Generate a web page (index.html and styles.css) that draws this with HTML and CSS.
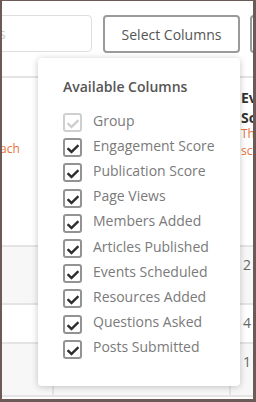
FILE: index.html
```html
<!DOCTYPE html>
<html>
<head>
<meta charset="utf-8">
<link rel="stylesheet" href="styles.css">
</head>
<body>
<div class="frame">
  <div class="toolbar">
    <div class="search"><span class="ph">s</span></div>
    <button class="btn">Select Columns</button>
    <div class="btn btn-cut"></div>
  </div>
  <div class="table">
    <div class="row head">
      <div class="cell c1"><span class="desc desc-left">ach</span></div>
      <div class="cell c2"></div>
      <div class="cell c3">
        <div class="htitle"><span class="hl1">Events</span><span class="hl2">Scheduled</span></div>
        <div class="desc">The scheduled</div>
      </div>
    </div>
    <div class="row r1 alt">
      <div class="cell c1"></div><div class="cell c2"></div><div class="cell c3 val">2</div>
    </div>
    <div class="row r2">
      <div class="cell c1"></div><div class="cell c2"></div><div class="cell c3 val">4</div>
    </div>
    <div class="row r3 alt">
      <div class="cell c1"></div><div class="cell c2"></div><div class="cell c3 val">1</div>
    </div>
  </div>

  <div class="dropdown">
    <div class="dd-title">Available Columns</div>
    <ul class="opts">
      <li class="opt disabled"><span class="cb"><svg viewBox="0 0 512 512"><path d="M173.9 439.4l-166.4-166.4c-10-10-10-26.2 0-36.2l36.2-36.2c10-10 26.2-10 36.2 0L192 312.7 432.1 72.6c10-10 26.2-10 36.2 0l36.2 36.2c10 10 10 26.2 0 36.2l-294.4 294.4c-10 10-26.2 10-36.2 0z"/></svg></span><span class="lbl">Group</span></li>
      <li class="opt"><span class="cb"><svg viewBox="0 0 512 512"><path d="M173.9 439.4l-166.4-166.4c-10-10-10-26.2 0-36.2l36.2-36.2c10-10 26.2-10 36.2 0L192 312.7 432.1 72.6c10-10 26.2-10 36.2 0l36.2 36.2c10 10 10 26.2 0 36.2l-294.4 294.4c-10 10-26.2 10-36.2 0z"/></svg></span><span class="lbl">Engagement Score</span></li>
      <li class="opt"><span class="cb"><svg viewBox="0 0 512 512"><path d="M173.9 439.4l-166.4-166.4c-10-10-10-26.2 0-36.2l36.2-36.2c10-10 26.2-10 36.2 0L192 312.7 432.1 72.6c10-10 26.2-10 36.2 0l36.2 36.2c10 10 10 26.2 0 36.2l-294.4 294.4c-10 10-26.2 10-36.2 0z"/></svg></span><span class="lbl">Publication Score</span></li>
      <li class="opt"><span class="cb"><svg viewBox="0 0 512 512"><path d="M173.9 439.4l-166.4-166.4c-10-10-10-26.2 0-36.2l36.2-36.2c10-10 26.2-10 36.2 0L192 312.7 432.1 72.6c10-10 26.2-10 36.2 0l36.2 36.2c10 10 10 26.2 0 36.2l-294.4 294.4c-10 10-26.2 10-36.2 0z"/></svg></span><span class="lbl">Page Views</span></li>
      <li class="opt"><span class="cb"><svg viewBox="0 0 512 512"><path d="M173.9 439.4l-166.4-166.4c-10-10-10-26.2 0-36.2l36.2-36.2c10-10 26.2-10 36.2 0L192 312.7 432.1 72.6c10-10 26.2-10 36.2 0l36.2 36.2c10 10 10 26.2 0 36.2l-294.4 294.4c-10 10-26.2 10-36.2 0z"/></svg></span><span class="lbl">Members Added</span></li>
      <li class="opt"><span class="cb"><svg viewBox="0 0 512 512"><path d="M173.9 439.4l-166.4-166.4c-10-10-10-26.2 0-36.2l36.2-36.2c10-10 26.2-10 36.2 0L192 312.7 432.1 72.6c10-10 26.2-10 36.2 0l36.2 36.2c10 10 10 26.2 0 36.2l-294.4 294.4c-10 10-26.2 10-36.2 0z"/></svg></span><span class="lbl">Articles Published</span></li>
      <li class="opt"><span class="cb"><svg viewBox="0 0 512 512"><path d="M173.9 439.4l-166.4-166.4c-10-10-10-26.2 0-36.2l36.2-36.2c10-10 26.2-10 36.2 0L192 312.7 432.1 72.6c10-10 26.2-10 36.2 0l36.2 36.2c10 10 10 26.2 0 36.2l-294.4 294.4c-10 10-26.2 10-36.2 0z"/></svg></span><span class="lbl">Events Scheduled</span></li>
      <li class="opt"><span class="cb"><svg viewBox="0 0 512 512"><path d="M173.9 439.4l-166.4-166.4c-10-10-10-26.2 0-36.2l36.2-36.2c10-10 26.2-10 36.2 0L192 312.7 432.1 72.6c10-10 26.2-10 36.2 0l36.2 36.2c10 10 10 26.2 0 36.2l-294.4 294.4c-10 10-26.2 10-36.2 0z"/></svg></span><span class="lbl">Resources Added</span></li>
      <li class="opt"><span class="cb"><svg viewBox="0 0 512 512"><path d="M173.9 439.4l-166.4-166.4c-10-10-10-26.2 0-36.2l36.2-36.2c10-10 26.2-10 36.2 0L192 312.7 432.1 72.6c10-10 26.2-10 36.2 0l36.2 36.2c10 10 10 26.2 0 36.2l-294.4 294.4c-10 10-26.2 10-36.2 0z"/></svg></span><span class="lbl">Questions Asked</span></li>
      <li class="opt"><span class="cb"><svg viewBox="0 0 512 512"><path d="M173.9 439.4l-166.4-166.4c-10-10-10-26.2 0-36.2l36.2-36.2c10-10 26.2-10 36.2 0L192 312.7 432.1 72.6c10-10 26.2-10 36.2 0l36.2 36.2c10 10 10 26.2 0 36.2l-294.4 294.4c-10 10-26.2 10-36.2 0z"/></svg></span><span class="lbl">Posts Submitted</span></li>
    </ul>
  </div>
</div>
</body>
</html>
```

FILE: styles.css
```css
html, body {
  margin: 0;
  padding: 0;
  background: #fff;
}
body {
  font-family: "Open Sans", "Liberation Sans", sans-serif;
}
.frame {
  position: relative;
  width: 256px;
  height: 402px;
  box-sizing: border-box;
  border-style: solid;
  border-color: #6b5a57;
  border-width: 1px 3px 3px 2px;
  overflow: hidden;
  background: #fff;
}
.toolbar {
  display: flex;
  align-items: flex-start;
  gap: 11px;
  padding-top: 14px;
  height: 75px;
  box-sizing: border-box;
}
.search {
  flex: none;
  width: 100px;
  height: 37px;
  margin-left: -10px;
  box-sizing: border-box;
  border: 1.5px solid #dedede;
  border-radius: 4px;
  display: flex;
  align-items: center;
  padding-left: 11px;
  overflow: hidden;
}
.ph {
  font-size: 14px;
  color: #c8c8c8;
  margin-left: -5px;
}
.btn {
  flex: none;
  width: 137px;
  height: 38px;
  box-sizing: border-box;
  border: 2px solid #9a9a9a;
  border-radius: 4px;
  background: #fff;
  font-family: "Open Sans", "Liberation Sans", sans-serif;
  font-size: 14px;
  color: #555;
  padding: 0;
}
.btn-cut {
  margin-left: -1px;
  width: 80px;
}
.table {
  width: 251px;
}
.row {
  display: grid;
  grid-template-columns: 50px 177px 24px;
  border-top: 2px solid #e4e4e4;
  box-sizing: border-box;
}
.row.alt {
  background: #f7f7f7;
}
.head { height: 169px; }
.r1 { height: 58px; }
.r2 { height: 39px; }
.r3 { height: 55px; border-bottom: 2px solid #e4e4e4; }
.cell {
  box-sizing: border-box;
  overflow: hidden;
}
.c2 { border-left: 2px solid #e4e4e4; }
.c3 {
  border-left: 2px solid #e4e4e4;
  padding-left: 10px;
  white-space: nowrap;
}
.head .c3 { padding-top: 9px; }
.htitle {
  font-size: 14px;
  font-weight: 700;
  color: #333;
}
.hl1 {
  display: block;
  line-height: 21px;
}
.hl2 {
  display: block;
  line-height: 14px;
  margin-top: 3px;
}
.desc {
  font-size: 12px;
  color: #e8733e;
  line-height: 17px;
  width: 60px;
  white-space: normal;
  display: block;
}
.desc-left {
  padding-top: 62px;
  margin-left: -2px;
}
.val {
  font-size: 14px;
  color: #666;
  padding-top: 7px;
  line-height: 22px;
  padding-left: 12px;
}
.dropdown {
  position: absolute;
  left: 36px;
  top: 57px;
  width: 202px;
  height: 328px;
  box-sizing: border-box;
  background: #fff;
  border-radius: 4px;
  box-shadow: 0 1px 7px rgba(0, 0, 0, 0.22);
  padding: 19px 0 0 25px;
}
.dd-title {
  font-size: 14px;
  font-weight: 600;
  color: #555;
  line-height: 20px;
  margin-bottom: 13px;
}
.opts {
  list-style: none;
  margin: 0;
  padding: 0;
}
.opt {
  display: flex;
  align-items: center;
  height: 25.2px;
  gap: 11px;
}
.cb {
  flex: none;
  width: 19px;
  height: 19px;
  box-sizing: border-box;
  border: 2px solid #939393;
  border-radius: 3px;
  display: flex;
  align-items: center;
  justify-content: center;
}
.cb svg {
  width: 12px;
  height: 12px;
  margin-top: 3px;
  fill: #2e2e2e;
}
.disabled .cb { border-color: #cfcfcf; }
.disabled .cb svg { fill: #cfcfcf; }
.lbl {
  font-size: 14px;
  color: #7a7a7a;
  line-height: 20px;
  white-space: nowrap;
  margin-top: -4px;
}
```
